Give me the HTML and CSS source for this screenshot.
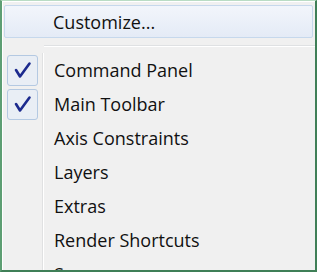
FILE: index.html
```html
<!DOCTYPE html>
<html lang="en">
<head>
    <meta charset="UTF-8">
    <title>View Menu</title>
    <link rel="stylesheet" href="styles.css">
</head>
<body>
    <div class="frame">
        <div class="menu">
            <div class="item hot"><span class="label">Customize...</span></div>
            <div class="sep"></div>
            <div class="list">
                <div class="row">
                    <div class="gutter"><span class="check"><svg width="29" height="29" viewBox="0 0 29 29"><path d="M8 14 L12 20.5 L21.5 7.5" fill="none" stroke="#1c2a8e" stroke-width="2.6" stroke-linecap="round" stroke-linejoin="round"/></svg></span></div>
                    <span class="label">Command Panel</span>
                </div>
                <div class="row">
                    <div class="gutter"><span class="check"><svg width="29" height="29" viewBox="0 0 29 29"><path d="M8 14 L12 20.5 L21.5 7.5" fill="none" stroke="#1c2a8e" stroke-width="2.6" stroke-linecap="round" stroke-linejoin="round"/></svg></span></div>
                    <span class="label">Main Toolbar</span>
                </div>
                <div class="row"><div class="gutter"></div><span class="label">Axis Constraints</span></div>
                <div class="row"><div class="gutter"></div><span class="label">Layers</span></div>
                <div class="row"><div class="gutter"></div><span class="label">Extras</span></div>
                <div class="row"><div class="gutter"></div><span class="label">Render Shortcuts</span></div>
                <div class="row"><div class="gutter"></div><span class="label">Snaps</span></div>
            </div>
        </div>
    </div>
</body>
</html>
```

FILE: styles.css
```css
html, body { margin: 0; padding: 0; background: #ffffff; }
body { font-family: "Open Sans", "Noto Sans", sans-serif; font-size: 18px; color: #111111; }
.frame { width: 317px; height: 272px; box-sizing: border-box; border-top: 1px solid #b9dcc4; border-left: 2px solid #5d9e73; border-right: 2px solid #3f7f57; border-bottom: 2px solid #3f7f57; overflow: hidden; }
.menu { height: 100%; background: #f0f0f0; box-shadow: inset 1px 1px 0 #ffffff; padding-top: 4px; box-sizing: border-box; }
.item { display: flex; align-items: center; height: 33px; margin: 0 2px; box-sizing: border-box; }
.item .label { padding-left: 48px; }
.hot { border: 1px solid #c6d8ec; border-radius: 2px; background: linear-gradient(#f2f5fb, #e4ebf6); }
.sep { height: 15px; position: relative; }
.sep::after { content: ""; position: absolute; left: 42px; right: 0; top: 7px; height: 1px; background: #dfe1e3; box-shadow: 0 1px 0 #ffffff; }
.list { display: flex; flex-direction: column; }
.row { display: flex; align-items: center; height: 34px; }
.gutter { width: 40px; height: 100%; display: flex; align-items: center; justify-content: center; border-right: 1px solid #e0e1e2; box-shadow: 1px 0 0 #ffffff; margin-right: 11px; }
.check { width: 31px; height: 31px; box-sizing: border-box; border: 1px solid #b4c9e2; border-radius: 3px; background: #e9eef5; display: flex; align-items: center; justify-content: center; }
.check svg { display: block; }
.row .label { line-height: 1; }
```
